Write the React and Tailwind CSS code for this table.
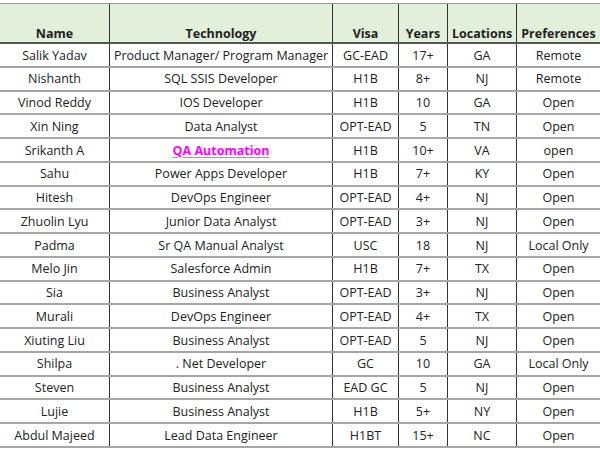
import React from "react";

const rows = [
  ["Salik Yadav", "Product Manager/ Program Manager", "GC-EAD", "17+", "GA", "Remote"],
  ["Nishanth", "SQL SSIS Developer", "H1B", "8+", "NJ", "Remote"],
  ["Vinod Reddy", "IOS Developer", "H1B", "10", "GA", "Open"],
  ["Xin Ning", "Data Analyst", "OPT-EAD", "5", "TN", "Open"],
  ["Srikanth A", "QA Automation", "H1B", "10+", "VA", "open"],
  ["Sahu", "Power Apps Developer", "H1B", "7+", "KY", "Open"],
  ["Hitesh", "DevOps Engineer", "OPT-EAD", "4+", "NJ", "Open"],
  ["Zhuolin Lyu", "Junior Data Analyst", "OPT-EAD", "3+", "NJ", "Open"],
  ["Padma", "Sr QA Manual Analyst", "USC", "18", "NJ", "Local Only"],
  ["Melo Jin", "Salesforce Admin", "H1B", "7+", "TX", "Open"],
  ["Sia", "Business Analyst", "OPT-EAD", "3+", "NJ", "Open"],
  ["Murali", "DevOps Engineer", "OPT-EAD", "4+", "TX", "Open"],
  ["Xiuting Liu", "Business Analyst", "OPT-EAD", "5", "NJ", "Open"],
  ["Shilpa", ". Net Developer", "GC", "10", "GA", "Local Only"],
  ["Steven", "Business Analyst", "EAD GC", "5", "NJ", "Open"],
  ["Lujie", "Business Analyst", "H1B", "5+", "NY", "Open"],
  ["Abdul Majeed", "Lead Data Engineer", "H1BT", "15+", "NC", "Open"],
];

const headers = ["Name", "Technology", "Visa", "Years", "Locations", "Preferences"];
const cols = "grid grid-cols-[110px_223px_66px_49px_69px_83px]";

export default function App() {
  return (
    <div
      className="w-[600px] h-[450px] bg-white overflow-hidden pt-[3px] text-[#222]"
      style={{ fontFamily: '"Open Sans", sans-serif' }}
    >
      <div className={`${cols} h-[41px] bg-[#e2efda] border-t border-[#9a9a9a] border-b-2 border-b-[#555]`}>
        {headers.map((h, i) => (
          <div
            key={h}
            className={`flex items-end justify-center pb-[1px] leading-[14px] text-[12.5px] font-bold ${i < 5 ? "border-r border-[#333]" : ""}`}
          >
            {h}
          </div>
        ))}
      </div>
      {rows.map((r, ri) => (
        <div key={ri} className={`${cols} h-[23.75px] border-b-2 border-[#a6a6a6]`}>
          {r.map((c, i) => (
            <div
              key={i}
              className={`flex items-center justify-center pt-[2px] text-[12.5px] whitespace-nowrap ${i < 5 ? "border-r border-[#333]" : ""}`}
            >
              {ri === 4 && i === 1 ? (
                <span className="font-bold text-[#ff00ff] underline decoration-[#6fa8dc] underline-offset-2">
                  {c}
                </span>
              ) : (
                c
              )}
            </div>
          ))}
        </div>
      ))}
    </div>
  );
}
